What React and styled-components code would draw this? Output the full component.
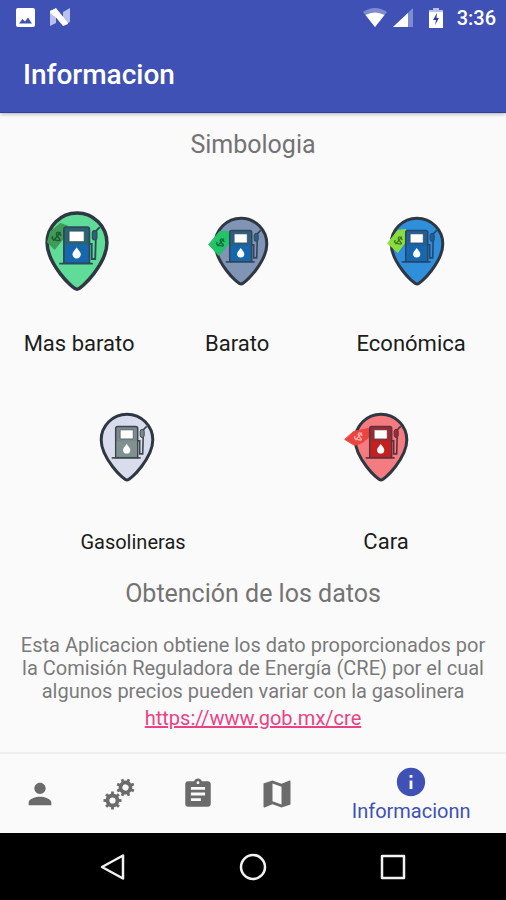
import { useState } from "react";
import styled, { createGlobalStyle } from "styled-components";
import { MdPerson, MdAssignment, MdMap, MdInfo } from "react-icons/md";

const GlobalStyle = createGlobalStyle`
  * {
    box-sizing: border-box;
  }
  body {
    margin: 0;
    background-color: #fafafa;
    font-family: Roboto, "Liberation Sans", sans-serif;
  }
`;

const Screen = styled.div`
  display: flex;
  flex-direction: column;
  min-height: 100vh;
`;

const Header = styled.header`
  background-color: #3f51b5;
  color: #fff;
  border-bottom: 1px solid #303f9f;
  box-shadow: 0 1px 4px rgba(0, 0, 0, 0.3);
`;

const StatusBar = styled.div`
  display: flex;
  justify-content: space-between;
  align-items: center;
  height: 36px;
  padding: 0 10px 0 16px;
`;

const StatusGroup = styled.div`
  display: flex;
  align-items: center;
  gap: ${props => props.$gap}px;
`;

const Clock = styled.time`
  font-size: 20px;
  font-weight: 500;
  line-height: 24px;
  margin-left: 6px;
`;

const Title = styled.h1`
  margin: 0;
  padding: 2px 23px 0;
  font-size: 28px;
  font-weight: 500;
  line-height: 74px;
`;

const Main = styled.main`
  flex: 1;
  padding-top: 16px;
`;

const Heading = styled.h2`
  margin: 0;
  color: #737373;
  font-size: 25px;
  font-weight: 400;
  line-height: 32px;
  text-align: center;
`;

const Legend = styled.ul`
  display: grid;
  grid-template-columns: ${props => props.$columns};
  margin: 0;
  padding: 40px 0 0;
  list-style: none;
`;

const LegendItem = styled.li`
  display: flex;
  flex-direction: column;
  align-items: center;
`;

const LegendLabel = styled.span`
  padding-left: ${props => (props.$indent ? 13 : 0)}px;
  margin-top: 28px;
  color: #1c1c1c;
  font-size: ${props => (props.$small ? 20 : 22)}px;
  line-height: 30px;
`;

const Source = styled.section`
  padding: 21px 20px 0;
  text-align: center;
`;

const Text = styled.p`
  margin: 24px 0 0;
  color: #7a7a7a;
  font-size: 20px;
  line-height: 23px;
`;

const SourceLink = styled.a`
  display: inline-block;
  margin-top: 4px;
  color: #ea4286;
  font-size: 20px;
  line-height: 23px;
`;

const TabBar = styled.nav`
  display: grid;
  grid-template-columns: 5fr 5fr 5fr 5fr 12fr;
  height: 81px;
  border-top: 2px solid #efefef;
`;

const Tab = styled.button`
  display: flex;
  flex-direction: column;
  align-items: center;
  justify-content: center;
  padding: 0;
  border: 0;
  background-color: transparent;
  color: ${props => (props.$active ? "#3f51b5" : "#6b6b6b")};
  font-family: inherit;
  font-size: 20px;
  line-height: 24px;
  cursor: pointer;
`;

const SystemBar = styled.nav`
  display: grid;
  grid-template-columns: repeat(3, 1fr);
  height: 67px;
  padding: 0 43px;
  background-color: #000;
`;

const SystemButton = styled.button`
  display: flex;
  align-items: center;
  justify-content: center;
  padding: 0;
  border: 0;
  background-color: transparent;
  color: #f2f2f2;
  cursor: pointer;
`;

const pins = {
  cheapest: {
    x: -2, y: 2, scale: 1.16, fill: "#5fdc98", top: "#2b6470", body: "#1767ae", line: "#2d4a5c",
    tag: "24.5,31 33,24 39,26 36,36 28,46 22,40", tagFill: "#3f9c58", tagMark: "#1f5b33",
    mark: [30, 35],
  },
  cheap: {
    x: 4, y: 2, scale: 1, fill: "#8094b5", top: "#2a6183", body: "#1767ae", line: "#34455a",
    tag: "15,41 26,28 36,28 39,35 25,52", tagFill: "#22c468", tagMark: "#126b3a",
    mark: [27, 39],
  },
  economic: {
    x: 6, y: 2, scale: 1, fill: "#2f8fdb", top: "#245f91", body: "#1767ae", line: "#26466a",
    tag: "18,40 28,27 36,26 39,31 37,37 28,49", tagFill: "#8add3c", tagMark: "#3a7a20",
    mark: [29, 37],
  },
  station: {
    x: 0, y: 0, scale: 1, fill: "#d9dcec", top: "#7b8a8d", body: "#80918f", line: "#3c474d",
  },
  expensive: {
    x: 1, y: 0, scale: 1, fill: "#f47c80", top: "#9c2b33", body: "#c3201f", line: "#5b3240",
    tag: "11,40 20,32 35,29 36,37 29,43 21,46", tagFill: "#ec4440", tagMark: "#ffb0a8",
    mark: [25, 37],
  },
};

function PinIcon({ kind }) {
  const pin = pins[kind];
  const cx = 50 + pin.x;
  const cy = 48 + pin.y;
  return (
    <svg width="100" height="100" viewBox="0 0 100 100" aria-hidden="true">
      <g transform={`translate(${cx} ${cy}) scale(${pin.scale}) translate(-47.3 -47.6)`}>
        <path
          d="M47.3 80.5C43 80.5 21.5 58 21.5 40.6a25.8 25.8 0 0 1 51.6 0C73.1 58 51.6 80.5 47.3 80.5Z"
          fill={pin.fill}
          stroke="#2f3742"
          strokeWidth="3"
        />
        {pin.tag && (
          <>
            <polygon points={pin.tag} fill={pin.tagFill} stroke={pin.tagFill} strokeLinejoin="round" />
            <g transform={`translate(${pin.mark[0]} ${pin.mark[1]}) rotate(40)`} fill="none" stroke={pin.tagMark}>
              <path d="M2.5-2.500q-4-2-4.500 0t4 2.500-0.500 3-4-1M0-5V5" strokeWidth="1.300" />
            </g>
          </>
        )}
        <path d="M36 58V29q0-2 2-2h18q2 0 2 2v29z" fill={pin.top} stroke={pin.line} strokeWidth="1.500" />
        <path d="M37 42h20v15.500H37z" fill={pin.body} />
        <path d="M32 58.500h29" stroke={pin.line} strokeWidth="1.600" />
        <path d="M40.500 30.500h13v9h-13z" fill="#fff" stroke={pin.line} strokeWidth="0.600" />
        <path d="M47 44.500c1.800 2.500 3.600 4 3.600 6a3.600 3.600 0 0 1-7.200 0c0-2 1.800-3.500 3.600-6z" fill="#fff" />
        <path d="M58 41.500h2v13h3l0.500-17M67 27l-4 4" fill="none" stroke={pin.line} strokeWidth="1.600" />
        <rect x="60.500" y="30" width="4" height="8" rx="2" fill={pin.top} stroke={pin.line} />
      </g>
    </svg>
  );
}

const teeth = [0, 45, 90, 135, 180, 225, 270, 315];

function Gear({ x, y, turn }) {
  return (
    <g transform={`translate(${x} ${y}) rotate(${turn})`} stroke="currentColor" fill="none">
      <circle r="5" strokeWidth="3.800" />
      {teeth.map(angle => (
        <path key={angle} d="M0-6V-9" strokeWidth="2.800" transform={`rotate(${angle})`} />
      ))}
    </g>
  );
}

function GearsIcon() {
  return (
    <svg width="34" height="34" viewBox="0 0 34 34" aria-hidden="true">
      <Gear x={23.5} y={10.5} turn={22} />
      <Gear x={10.5} y={23.5} turn={0} />
    </svg>
  );
}

function PictureIcon() {
  return (
    <svg width="20" height="20" viewBox="0 0 20 20" aria-hidden="true">
      <path fill="#fff" fillRule="evenodd" d="M2 0h15q2 0 2 2v15q0 2-2 2H2q-2 0-2-2V2Q0 0 2 0zM3 15.500h13l-4-6-3 4-2.500-2.500z" />
    </svg>
  );
}

function NougatIcon() {
  return (
    <svg width="22" height="20" viewBox="0 0 22 20" aria-hidden="true">
      <path fill="#b9c1ea" d="M1 2l6 5v8l-6 3zM14 4l7-4v14l-7 3z" />
      <path fill="#fff" d="M1 3l6-3 8 10 4 5v1l-5 2L7 9.500 1 5z" />
    </svg>
  );
}

function WifiIcon() {
  return (
    <svg width="24" height="20" viewBox="0 0 24 20" aria-hidden="true">
      <path fill="#7f8bd0" d="M0 4q12-8 24 0L12 19z" />
      <path fill="#fff" d="M2.500 7q9.500-5 19 0L12 19z" />
    </svg>
  );
}

function SignalIcon() {
  return (
    <svg width="20" height="20" viewBox="0 0 20 20" aria-hidden="true">
      <path fill="#7f8bd0" d="M20 0v19H0z" />
      <path fill="#fff" d="M15 5v14H0z" />
    </svg>
  );
}

function BatteryIcon() {
  return (
    <svg width="14" height="20" viewBox="0 0 14 20" aria-hidden="true">
      <path fill="#b9c1ea" d="M4 0h6v2h4v3H0V2h4z" />
      <path fill="#fff" d="M0 4h14v16H0z" />
      <path fill="#303f9f" d="M8 5L4 12h3L6 17l4-7H7.500z" />
    </svg>
  );
}

const tabs = [
  { id: "profile", name: "Perfil", icon: <MdPerson size={34} /> },
  { id: "settings", name: "Ajustes", icon: <GearsIcon /> },
  { id: "list", name: "Lista", icon: <MdAssignment size={34} /> },
  { id: "map", name: "Mapa", icon: <MdMap size={36} /> },
  { id: "info", name: "Informacionn", icon: <MdInfo size={34} />, label: true },
];

export default function App() {

  const [activeTab, setActiveTab] = useState("info");

  return (
    <Screen>
      <GlobalStyle />
      <Header>
        <StatusBar>
          <StatusGroup $gap={13}>
            <PictureIcon />
            <NougatIcon />
          </StatusGroup>
          <StatusGroup $gap={16}>
            <StatusGroup $gap={6}>
              <WifiIcon />
              <SignalIcon />
            </StatusGroup>
            <StatusGroup $gap={8}>
              <BatteryIcon />
              <Clock>3:36</Clock>
            </StatusGroup>
          </StatusGroup>
        </StatusBar>
        <Title>Informacion</Title>
      </Header>
      <Main>
        <Heading>Simbologia</Heading>
        <Legend $columns="5fr 5fr 6fr">
          <LegendItem>
            <PinIcon kind="cheapest" />
            <LegendLabel>Mas barato</LegendLabel>
          </LegendItem>
          <LegendItem>
            <PinIcon kind="cheap" />
            <LegendLabel>Barato</LegendLabel>
          </LegendItem>
          <LegendItem>
            <PinIcon kind="economic" />
            <LegendLabel>Económica</LegendLabel>
          </LegendItem>
        </Legend>
        <Legend $columns="1fr 1fr">
          <LegendItem>
            <PinIcon kind="station" />
            <LegendLabel $indent $small>Gasolineras</LegendLabel>
          </LegendItem>
          <LegendItem>
            <PinIcon kind="expensive" />
            <LegendLabel $indent>Cara</LegendLabel>
          </LegendItem>
        </Legend>
        <Source>
          <Heading>Obtención de los datos</Heading>
          <Text>
            Esta Aplicacion obtiene los dato proporcionados por la Comisión Reguladora de
            Energía (CRE) por el cual algunos precios pueden variar con la gasolinera
          </Text>
          <SourceLink href="https://www.gob.mx/cre">https://www.gob.mx/cre</SourceLink>
        </Source>
      </Main>
      <TabBar>
        {tabs.map(tab => (
          <Tab
            key={tab.id}
            type="button"
            aria-label={tab.name}
            $active={activeTab === tab.id}
            onClick={() => setActiveTab(tab.id)}
          >
            {tab.icon}
            {tab.label && <span>{tab.name}</span>}
          </Tab>
        ))}
      </TabBar>
      <SystemBar>
        <SystemButton type="button" aria-label="Atrás">
          <svg width="28" height="28" viewBox="0 0 28 28" fill="none" stroke="currentColor" strokeWidth="2.500" strokeLinejoin="round">
            <path d="M24 2.500v23L3 14z" />
          </svg>
        </SystemButton>
        <SystemButton type="button" aria-label="Inicio">
          <svg width="28" height="28" viewBox="0 0 28 28" fill="none" stroke="currentColor" strokeWidth="2.500">
            <circle cx="14" cy="14" r="12" />
          </svg>
        </SystemButton>
        <SystemButton type="button" aria-label="Recientes">
          <svg width="28" height="28" viewBox="0 0 28 28" fill="none" stroke="currentColor" strokeWidth="2.500" strokeLinejoin="round">
            <rect x="3" y="3" width="22" height="22" />
          </svg>
        </SystemButton>
      </SystemBar>
    </Screen>
  );
}
